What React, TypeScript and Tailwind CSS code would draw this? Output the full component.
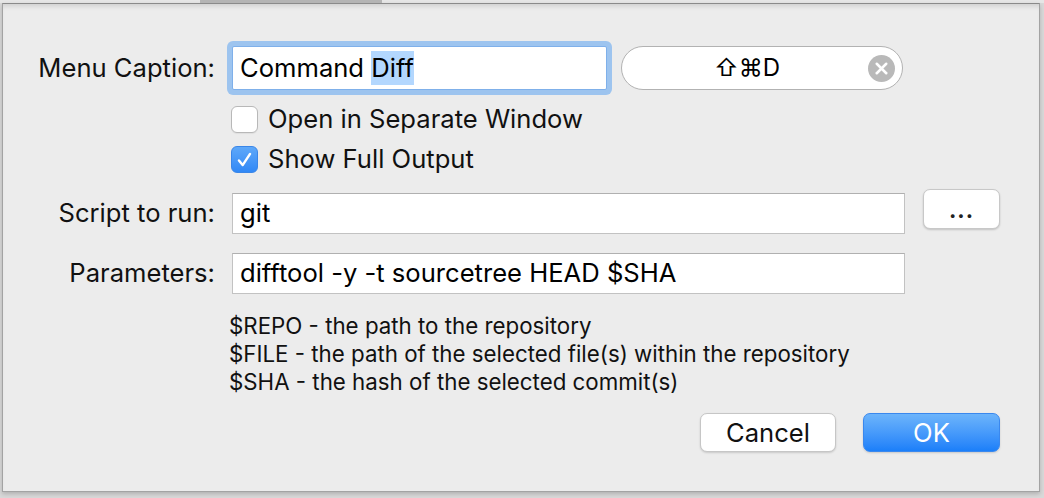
import { X } from 'lucide-react';

function Checkbox({ checked }: { checked: boolean }) {
  if (checked) {
    return (
      <span className="w-[27px] h-[27px] rounded-[6px] bg-gradient-to-b from-[#5ea8f9] to-[#3088f6] border border-[#3a86e8] flex items-center justify-center">
        <svg width="27" height="27" viewBox="0 0 27 27">
          <path d="M7.5 14.5 L11.5 19.5 L19.5 7.5" stroke="white" strokeWidth="2.6" fill="none" strokeLinecap="round" strokeLinejoin="round" />
        </svg>
      </span>
    );
  }
  return <span className="w-[27px] h-[27px] rounded-[6px] bg-white border border-[#b8b8b8] shadow-[0_1px_1px_rgba(0,0,0,0.06)]" />;
}

function FieldLabel({ children }: { children: React.ReactNode }) {
  return <div className="w-[212px] shrink-0 text-right text-[25.6px] text-[#111]">{children}</div>;
}

export default function App() {
  return (
    <div className="w-[1044px] h-[498px] bg-[#d8d8d8] overflow-hidden font-['Inter','DejaVu_Sans',sans-serif]">
      <div className="h-[3px] bg-[#e6e6e6] flex">
        <div className="ml-[200px] w-[182px] bg-[#b4b4b4]" />
      </div>

      <div className="ml-[2px] w-[1038px] h-[489px] bg-[#ececec] border border-[#a3a3a3] border-t-[#8a8a8a] shadow-[inset_0_5px_5px_-3px_rgba(0,0,0,0.13),0_2px_4px_rgba(0,0,0,0.18)]">
        {/* menu caption */}
        <div className="mt-[42px] flex items-center h-[44px]">
          <FieldLabel>Menu Caption:</FieldLabel>
          <div className="ml-[17px] w-[375px] h-[44px] bg-white border border-[#7fb0ea] ring-[5px] ring-[#9dc4ef] rounded-[2px] flex items-center pl-[7px] text-[25.6px] text-black">
            <span>Command&nbsp;</span>
            <span className="bg-[#b3d7fe] leading-[34px]">Diff</span>
          </div>
          <div className="ml-[14px] w-[282px] h-[44px] rounded-full bg-white border border-[#b2b2b2] flex items-center relative">
            <div className="flex-1 text-center pr-[30px] text-[24px] text-black">⇧⌘D</div>
            <div className="absolute right-[7px] top-[8px] w-[27px] h-[27px] rounded-full bg-[#b9b9b9] flex items-center justify-center">
              <X size={19} strokeWidth={3.2} color="#ffffff" />
            </div>
          </div>
        </div>

        {/* options */}
        <div className="ml-[228px] mt-[16px] flex items-center gap-[10px] h-[27px] text-[25.6px] text-[#111]">
          <Checkbox checked={false} />
          <span>Open in Separate Window</span>
        </div>
        <div className="ml-[228px] mt-[13px] flex items-center gap-[10px] h-[27px] text-[25.6px] text-[#111]">
          <Checkbox checked />
          <span>Show Full Output</span>
        </div>

        {/* script */}
        <div className="mt-[16px] flex items-start">
          <div className="mt-[4px] h-[41px] flex items-center justify-end">
            <FieldLabel>Script to run:</FieldLabel>
          </div>
          <div className="ml-[17px] mt-[4px] w-[673px] h-[41px] bg-white border border-[#c2c2c2] border-t-[#b0b0b0] flex items-center pl-[7px] text-[25.6px] text-black">
            git
          </div>
          <button className="ml-[18px] w-[77px] h-[40px] rounded-[7px] bg-white border border-[#c8c8c8] shadow-[0_1px_2px_rgba(0,0,0,0.18)] flex items-end justify-center pb-[7px] text-[22px] font-bold leading-none text-[#222] tracking-[1px]">
            ...
          </button>
        </div>

        {/* parameters */}
        <div className="mt-[19px] flex items-center">
          <FieldLabel>Parameters:</FieldLabel>
          <div className="ml-[17px] w-[673px] h-[41px] bg-white border border-[#c2c2c2] border-t-[#b0b0b0] flex items-center pl-[7px] text-[25.6px] text-black">
            difftool -y -t sourcetree HEAD $SHA
          </div>
        </div>

        <div className="mt-[18px] ml-[226px] text-[22.3px] leading-[28px] text-[#111]">
          <div>$REPO - the path to the repository</div>
          <div>$FILE - the path of the selected file(s) within the repository</div>
          <div>$SHA - the hash of the selected commit(s)</div>
        </div>

        <div className="mt-[17px] flex justify-end pr-[39px] gap-[27px]">
          <button className="w-[136px] h-[39px] rounded-[7px] bg-white border border-[#c6c6c6] shadow-[0_1px_2px_rgba(0,0,0,0.15)] text-[25.6px] text-[#111]">
            Cancel
          </button>
          <button className="w-[137px] h-[39px] rounded-[7px] bg-gradient-to-b from-[#6cb4fb] to-[#1a7ff9] border border-[#3a88ee] shadow-[0_1px_2px_rgba(0,0,0,0.15)] text-[25.6px] text-white">
            OK
          </button>
        </div>
      </div>
    </div>
  );
}
